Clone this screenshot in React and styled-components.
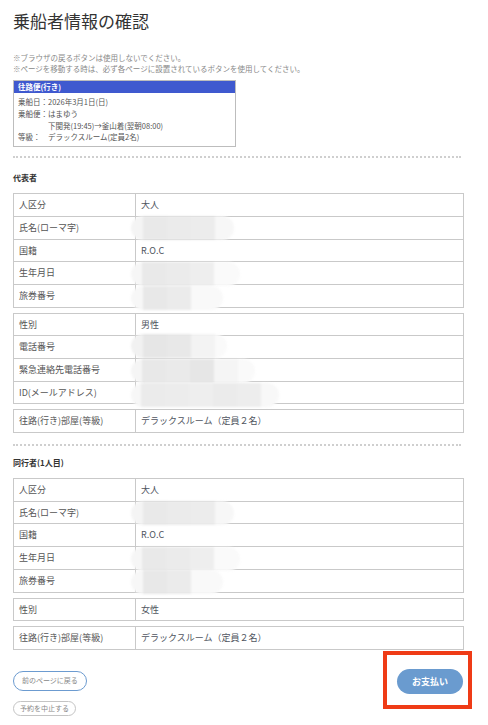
import React from "react";
import styled, {createGlobalStyle} from "styled-components";

const GlobalStyle = createGlobalStyle`
  html, body {
    margin: 0;
    padding: 0;
    background: #fff;
  }
  body {
    font-family: "Noto Sans CJK JP", "Noto Sans", sans-serif;
    color: #555;
  }
`;

const Page = styled.div`
  width: 451px;
  padding: 9px 0 0 13px;
`;

const Title = styled.h1`
  margin: 0;
  font-size: 17px;
  line-height: 24px;
  font-weight: 400;
  color: #333;
`;

const Notes = styled.div`
  margin-top: 19px;
  font-size: 7.5px;
  line-height: 11px;
  color: #888;
  white-space: nowrap;
`;

const TripBox = styled.div`
  margin-top: 6px;
  width: 221px;
  border: 1px solid #bdbdbd;
`;

const TripHeader = styled.div`
  height: 12px;
  line-height: 12px;
  padding-left: 4px;
  background: #3f59cf;
  color: #fff;
  font-size: 7.5px;
  font-weight: 700;
`;

const TripBody = styled.div`
  display: grid;
  grid-template-columns: 30px 1fr;
  grid-auto-rows: 11.8px;
  padding: 3px 4px;
  font-size: 7.5px;
  line-height: 11.8px;
  color: #555;
`;

const Dotted = styled.div`
  width: 448px;
  margin-top: ${p => p.$top}px;
  border-top: 2px dotted #cfcfcf;
`;

const Heading = styled.div`
  margin-top: ${p => p.$top}px;
  font-size: 8px;
  line-height: 12px;
  font-weight: 700;
  color: #333;
`;

const Table = styled.div`
  margin-top: ${p => p.$top}px;
  border: 1px solid #c9c9c9;
`;

const Row = styled.div`
  display: grid;
  grid-template-columns: 122px 1fr;
  height: 21.7px;
  & + & {
    border-top: 1px solid #c9c9c9;
  }
`;

const Label = styled.div`
  padding-left: 5px;
  border-right: 1px solid #c9c9c9;
  font-size: 9px;
  line-height: 21.7px;
  color: #555;
  white-space: nowrap;
`;

const Value = styled.div`
  position: relative;
  padding-left: 5px;
  font-size: 9px;
  line-height: 21.7px;
  color: #4f5560;
  white-space: nowrap;
`;

const Mosaic = styled.div`
  position: absolute;
  left: -5px;
  top: ${p => p.$top || 0}px;
  height: 24px;
  display: flex;
  border-radius: 12px;
  overflow: hidden;
  filter: blur(0.8px);
  z-index: 1;
`;

const Block = styled.div`
  width: ${p => p.$w}px;
  height: 100%;
  background: ${p => p.$c};
`;

const Footer = styled.div`
  display: flex;
  justify-content: space-between;
  align-items: flex-start;
  margin-top: 1px;
`;

const BackLinks = styled.div`
  display: flex;
  flex-direction: column;
  align-items: flex-start;
  gap: 10px;
  padding-top: 20px;
`;

const PillButton = styled.button`
  box-sizing: border-box;
  height: ${p => (p.$small ? 15 : 20)}px;
  padding: 0 ${p => (p.$small ? 6 : 8)}px;
  border: 1px solid ${p => (p.$small ? "#c4c4c4" : "#6c9bd0")};
  border-radius: 10px;
  background: #fff;
  font-family: inherit;
  font-size: 7px;
  line-height: 1;
  color: #888;
  cursor: pointer;
`;

const Highlight = styled.div`
  margin-right: -8px;
  padding: 11px 5px 11px 10px;
  border: 4px solid #ef3b16;
`;

const PayButton = styled.button`
  width: 66px;
  height: 25px;
  border: none;
  border-radius: 13px;
  background: #6a9bcf;
  color: #fff;
  font-family: inherit;
  font-size: 9px;
  font-weight: 700;
  cursor: pointer;
`;

const masks = {
  name: [[12, "#f4f4f4"], [24, "#e9e9e9"], [24, "#ebebeb"], [24, "#ececec"], [19, "#f7f7f7"]],
  birth: [[11, "#f6f6f6"], [24, "#e9e9e9"], [24, "#ebebeb"], [24, "#eeeeee"], [26, "#fafafa"]],
  passport: [[12, "#f7f7f7"], [24, "#e8e8e8"], [24, "#ebebeb"], [32, "#f9f9f9"]],
  tel: [[12, "#f1f1f1"], [24, "#e6e6e6"], [24, "#e8e8e8"], [24, "#f3f3f3"], [12, "#fafafa"]],
  emergency: [[11, "#f5f5f5"], [24, "#e8e8e8"], [24, "#eaeaea"], [24, "#e6e6e6"], [24, "#f5f5f5"], [17, "#fafafa"]],
  mail: [[10, "#f7f7f7"], [24, "#ebebeb"], [24, "#ececec"], [24, "#eeeeee"], [24, "#ebebeb"], [24, "#ededed"], [18, "#f8f8f8"]],
};

const Masked = ({pattern, top}) => (
  <Mosaic $top={top}>
    {pattern.map(([w, c], i) => <Block key={i} $w={w} $c={c}/>)}
  </Mosaic>
);

const InfoTable = ({rows, top}) => (
  <Table $top={top}>
    {rows.map(r => (
      <Row key={r.label}>
        <Label>{r.label}</Label>
        <Value>
          {r.value}
          {r.mask && <Masked pattern={masks[r.mask]} top={r.maskTop}/>}
        </Value>
      </Row>
    ))}
  </Table>
);

const room = {label: "往路(行き)部屋(等級)", value: "デラックスルーム（定員２名）"};

export default function App() {
  return (
    <Page>
      <GlobalStyle/>
      <Title>乗船者情報の確認</Title>
      <Notes>
        ※ブラウザの戻るボタンは使用しないでください。<br/>
        ※ページを移動する時は、必ず各ページに設置されているボタンを使用してください。
      </Notes>
      <TripBox>
        <TripHeader>往路便(行き)</TripHeader>
        <TripBody>
          <span>乗船日：</span><span>2026年3月1日(日)</span>
          <span>乗船便：</span><span>はまゆう</span>
          <span/><span>下関発(19:45)→釜山着(翌朝08:00)</span>
          <span>等級：</span><span>デラックスルーム(定員2名)</span>
        </TripBody>
      </TripBox>

      <Dotted $top={9}/>
      <Heading $top={14}>代表者</Heading>
      <InfoTable top={9} rows={[
        {label: "人区分", value: "大人"},
        {label: "氏名(ローマ字)", mask: "name", maskTop: -1},
        {label: "国籍", value: "R.O.C"},
        {label: "生年月日", mask: "birth", maskTop: 0},
        {label: "旅券番号", mask: "passport", maskTop: 1},
      ]}/>
      <InfoTable top={5} rows={[
        {label: "性別", value: "男性"},
        {label: "電話番号", mask: "tel", maskTop: -2},
        {label: "緊急連絡先電話番号", mask: "emergency", maskTop: 0},
        {label: "ID(メールアドレス)", mask: "mail", maskTop: 1},
      ]}/>
      <InfoTable top={5} rows={[room]}/>

      <Dotted $top={11}/>
      <Heading $top={11}>同行者(1人目)</Heading>
      <InfoTable top={9} rows={[
        {label: "人区分", value: "大人"},
        {label: "氏名(ローマ字)", mask: "name", maskTop: -1},
        {label: "国籍", value: "R.O.C"},
        {label: "生年月日", mask: "birth", maskTop: 0},
        {label: "旅券番号", mask: "passport", maskTop: 0},
      ]}/>
      <InfoTable top={5} rows={[{label: "性別", value: "女性"}]}/>
      <InfoTable top={5} rows={[room]}/>

      <Footer>
        <BackLinks>
          <PillButton>前のページに戻る</PillButton>
          <PillButton $small>予約を中止する</PillButton>
        </BackLinks>
        <Highlight>
          <PayButton>お支払い</PayButton>
        </Highlight>
      </Footer>
    </Page>
  );
}
